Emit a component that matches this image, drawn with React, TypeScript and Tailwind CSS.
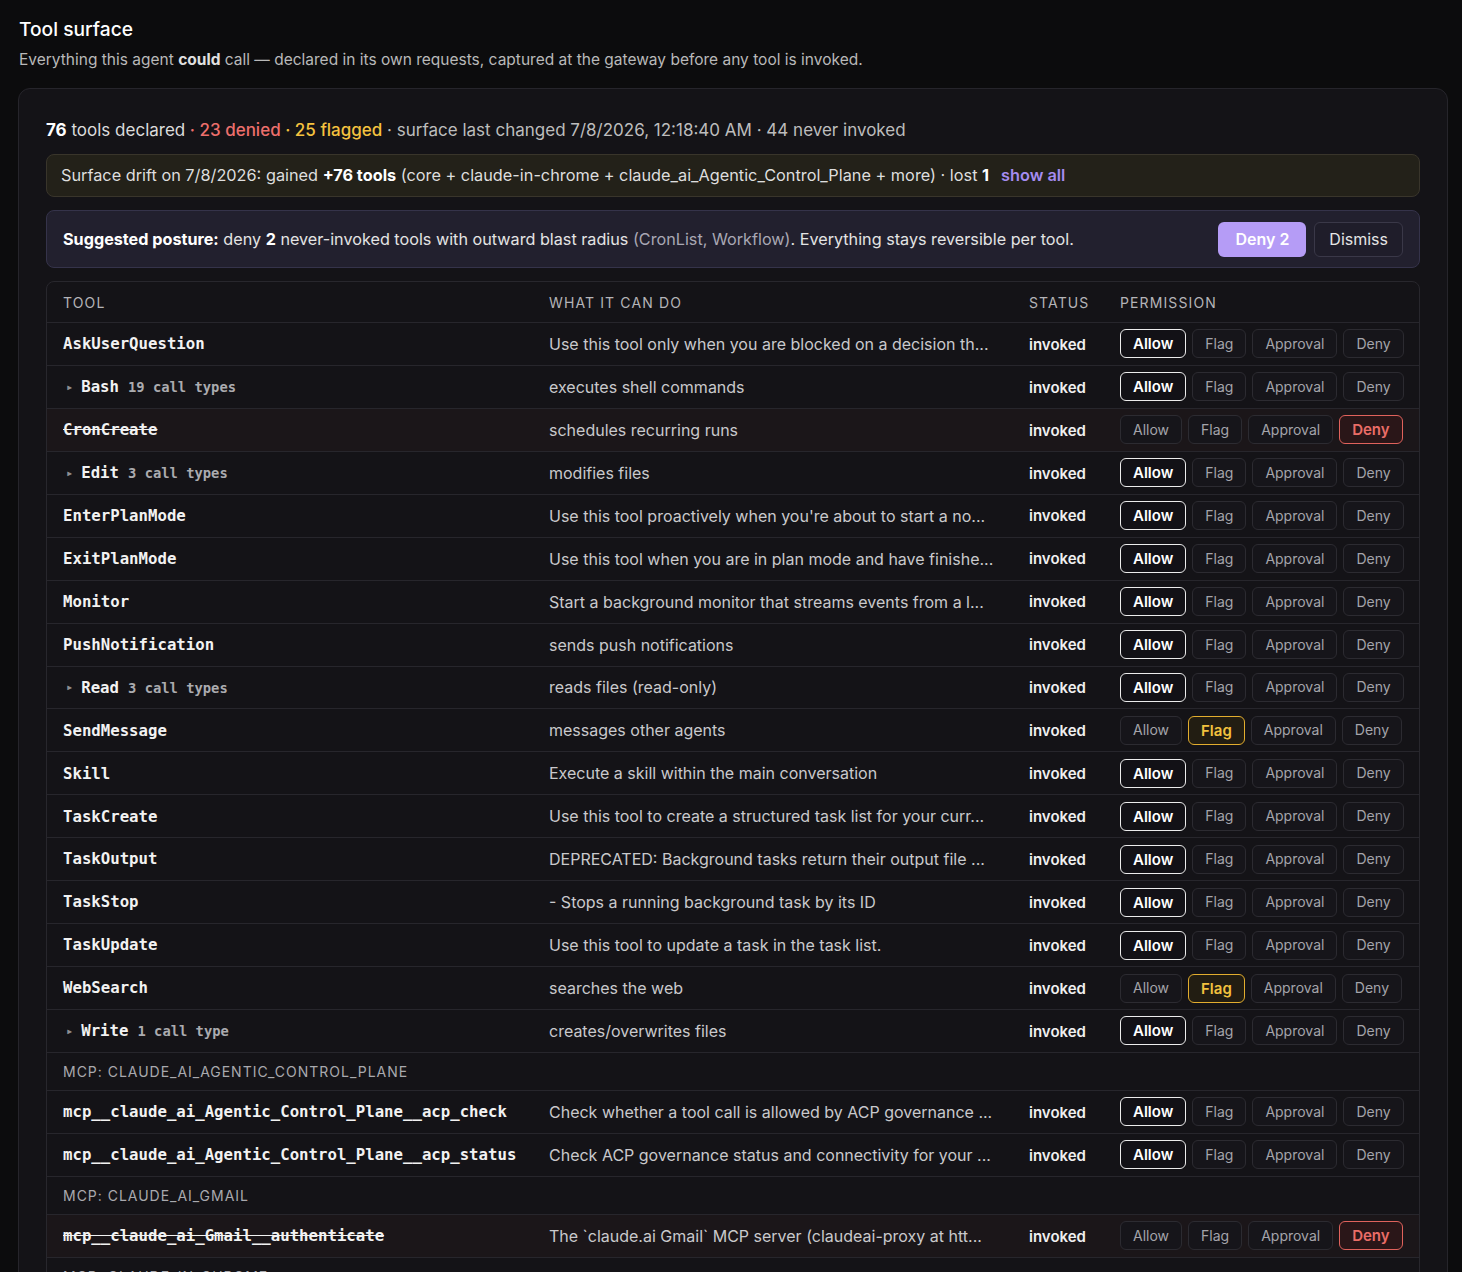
import React from 'react';

type Perm = 'allow' | 'flag' | 'approval' | 'deny';

type Row =
  | { kind: 'tool'; name: string; calls?: string; desc: string; perm: Perm }
  | { kind: 'group'; label: string };

const rows: Row[] = [
  { kind: 'tool', name: 'AskUserQuestion', desc: 'Use this tool only when you are blocked on a decision th...', perm: 'allow' },
  { kind: 'tool', name: 'Bash', calls: '19 call types', desc: 'executes shell commands', perm: 'allow' },
  { kind: 'tool', name: 'CronCreate', desc: 'schedules recurring runs', perm: 'deny' },
  { kind: 'tool', name: 'Edit', calls: '3 call types', desc: 'modifies files', perm: 'allow' },
  { kind: 'tool', name: 'EnterPlanMode', desc: "Use this tool proactively when you're about to start a no...", perm: 'allow' },
  { kind: 'tool', name: 'ExitPlanMode', desc: 'Use this tool when you are in plan mode and have finishe...', perm: 'allow' },
  { kind: 'tool', name: 'Monitor', desc: 'Start a background monitor that streams events from a l...', perm: 'allow' },
  { kind: 'tool', name: 'PushNotification', desc: 'sends push notifications', perm: 'allow' },
  { kind: 'tool', name: 'Read', calls: '3 call types', desc: 'reads files (read-only)', perm: 'allow' },
  { kind: 'tool', name: 'SendMessage', desc: 'messages other agents', perm: 'flag' },
  { kind: 'tool', name: 'Skill', desc: 'Execute a skill within the main conversation', perm: 'allow' },
  { kind: 'tool', name: 'TaskCreate', desc: 'Use this tool to create a structured task list for your curr...', perm: 'allow' },
  { kind: 'tool', name: 'TaskOutput', desc: 'DEPRECATED: Background tasks return their output file ...', perm: 'allow' },
  { kind: 'tool', name: 'TaskStop', desc: '- Stops a running background task by its ID', perm: 'allow' },
  { kind: 'tool', name: 'TaskUpdate', desc: 'Use this tool to update a task in the task list.', perm: 'allow' },
  { kind: 'tool', name: 'WebSearch', desc: 'searches the web', perm: 'flag' },
  { kind: 'tool', name: 'Write', calls: '1 call type', desc: 'creates/overwrites files', perm: 'allow' },
  { kind: 'group', label: 'MCP: CLAUDE_AI_AGENTIC_CONTROL_PLANE' },
  { kind: 'tool', name: 'mcp__claude_ai_Agentic_Control_Plane__acp_check', desc: 'Check whether a tool call is allowed by ACP governance ...', perm: 'allow' },
  { kind: 'tool', name: 'mcp__claude_ai_Agentic_Control_Plane__acp_status', desc: 'Check ACP governance status and connectivity for your ...', perm: 'allow' },
  { kind: 'group', label: 'MCP: CLAUDE_AI_GMAIL' },
  { kind: 'tool', name: 'mcp__claude_ai_Gmail__authenticate', desc: 'The `claude.ai Gmail` MCP server (claudeai-proxy at htt...', perm: 'deny' },
  { kind: 'group', label: 'MCP: CLAUDE_IN_CHROME' },
];

const mono = "font-['DejaVu_Sans_Mono',monospace]";

function PermButtons({ perm }: { perm: Perm }) {
  const opts: { key: Perm; label: string }[] = [
    { key: 'allow', label: 'Allow' },
    { key: 'flag', label: 'Flag' },
    { key: 'approval', label: 'Approval' },
    { key: 'deny', label: 'Deny' },
  ];
  return (
    <div className="flex items-center gap-1.5">
      {opts.map((o) => {
        const on = o.key === perm;
        let cls = 'border-[#2c2b31] bg-[#16151a] text-[#a4a4aa] font-normal text-[14px]';
        if (on && o.key === 'allow') cls = 'border-[#ececec] bg-[#121116] text-white font-semibold text-[15px]';
        if (on && o.key === 'flag') cls = 'border-[#e2ad2e] bg-[#221d12] text-[#f2c13e] font-semibold text-[15px]';
        if (on && o.key === 'deny') cls = 'border-[#e0625c] bg-[#2a1618] text-[#ea6d67] font-semibold text-[15px]';
        return (
          <button key={o.key} className={`h-[29px] px-3 rounded-md border leading-none ${cls}`}>
            {o.label}
          </button>
        );
      })}
    </div>
  );
}

export default function App() {
  return (
    <div className="min-h-screen bg-[#0c0c0d] pl-[18px] pr-[14px] pt-[15px] pb-10 font-['Inter',sans-serif] text-[#e6e6e6]">
      <h1 className="text-[19.2px] font-medium text-white leading-[28px] pl-px">Tool surface</h1>
      <p className="mt-[5px] text-[15.5px] text-[#b9b9b9] leading-6 pl-px">
        Everything this agent <span className="font-bold text-[#e0e0e0]">could</span> call — declared in its own requests, captured at the gateway before any tool is invoked.
      </p>

      <div className="mt-[16px] rounded-xl border border-[#26252b] bg-[#141317] px-[27px] pt-[29px] pb-8">
        {/* Summary line */}
        <div className="text-[17px] leading-6 text-[#bdbdbd]">
          <span className="font-bold text-white">76</span>
          <span className="text-[#dcdcdc]"> tools declared</span>
          <span className="text-[#ed6f6c] font-medium"> · 23 denied</span>
          <span className="text-[#f5c23f] font-medium"> · 25 flagged</span>
          <span> · surface last changed 7/8/2026, 12:18:40 AM · 44 never invoked</span>
        </div>

        {/* Drift */}
        <div className="mt-[12px] rounded-lg border border-[#39352b] bg-[#232119] px-[14px] h-[43px] flex items-center text-[16.3px] text-[#dedede]">
          <span>
            Surface drift on 7/8/2026: gained <span className="font-bold text-white">+76 tools</span> (core + claude-in-chrome + claude_ai_Agentic_Control_Plane + more) · lost{' '}
            <span className="font-bold text-white">1</span>
          </span>
          <span className="ml-3 font-semibold text-[#a58cf0]">show all</span>
        </div>

        {/* Suggested posture */}
        <div className="mt-[13px] rounded-lg border border-[#35334a] bg-[#22202e] pl-4 pr-4 h-[58px] flex items-center justify-between text-[16.2px] text-[#e4e4e4]">
          <div>
            <span className="font-bold text-white">Suggested posture:</span> deny <span className="font-bold text-white">2</span> never-invoked tools with outward blast radius{' '}
            <span className="text-[#a9a8b4]">(CronList, Workflow)</span>. Everything stays reversible per tool.
          </div>
          <div className="flex items-center gap-2">
            <button className="h-[35px] px-[17px] rounded-md bg-[#b59cf6] text-white font-semibold text-[16px]">Deny 2</button>
            <button className="h-[35px] px-[14px] rounded-md border border-[#3a3848] bg-[#1f1d2a] text-[#e6e6e6] text-[16px]">Dismiss</button>
          </div>
        </div>

        {/* Table */}
        <div className="mt-[13px] rounded-lg border border-[#28272d] bg-[#141317] overflow-hidden">
          <div className="grid grid-cols-[486px_480px_91px_1fr] items-center h-[40px] pl-4 text-[14px] tracking-[0.08em] text-[#b4b4b8] uppercase">
            <div>Tool</div>
            <div>What it can do</div>
            <div>Status</div>
            <div>Permission</div>
          </div>
          {rows.map((r, i) => {
            if (r.kind === 'group') {
              return (
                <div
                  key={i}
                  className="h-[38px] border-t border-[#27262c] pl-4 flex items-center text-[14px] tracking-[0.07em] text-[#a9a9ae]"
                >
                  {r.label}
                </div>
              );
            }
            const denied = r.perm === 'deny';
            return (
              <div
                key={i}
                className={`grid grid-cols-[486px_480px_91px_1fr] items-center h-[42.94px] border-t border-[#27262c] pl-4 ${denied ? 'bg-[#1b1619]' : ''}`}
              >
                <div className={`flex items-baseline whitespace-nowrap ${mono}`}>
                  {r.calls && <span className="self-center mr-[8px] ml-[3px] text-[12px] leading-none text-[#8e8e92]">▸</span>}
                  <span className={`text-[15.7px] font-bold text-[#f2f2f2] ${denied ? 'line-through' : ''}`}>{r.name}</span>
                  {r.calls && <span className="ml-[9px] text-[13.8px] font-bold text-[#ababaf]">{r.calls}</span>}
                </div>
                <div className="text-[16px] text-[#c9c9cc] whitespace-nowrap overflow-hidden">{r.desc}</div>
                <div className="text-[15px] font-semibold text-[#f0f0f0] pt-[2px]">invoked</div>
                <PermButtons perm={r.perm} />
              </div>
            );
          })}
        </div>
      </div>
    </div>
  );
}
